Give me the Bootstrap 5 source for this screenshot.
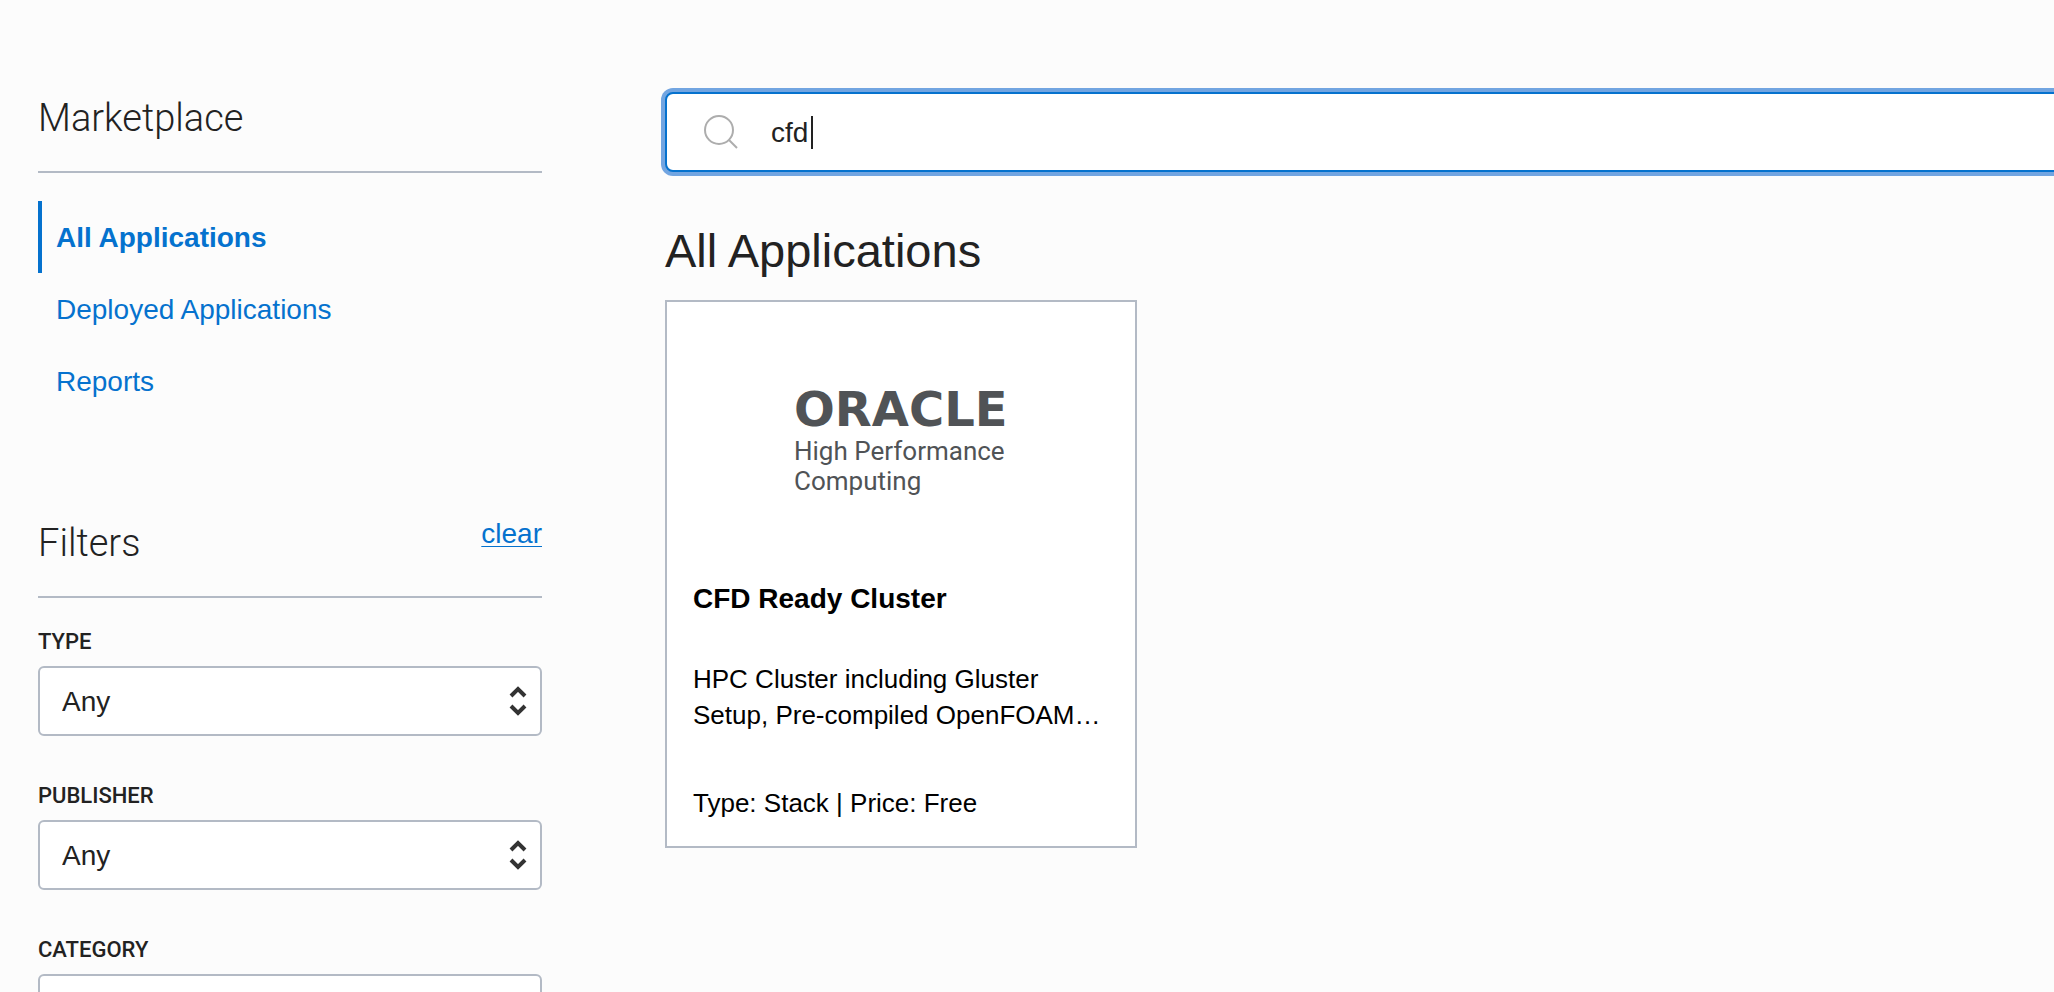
<!DOCTYPE html>
<html lang="en">
<head>
<meta charset="utf-8">
<meta name="viewport" content="width=device-width, initial-scale=1">
<title>Marketplace</title>
<link href="https://cdn.jsdelivr.net/npm/bootstrap@5.3.0/dist/css/bootstrap.min.css" rel="stylesheet">
<style>
  :root { --line: #b3bac5; --link: #0572ce; --ink: #222; }
  body { background: #fcfcfc; color: var(--ink); font-family: "Liberation Sans", Arial, sans-serif; font-size: 28px; line-height: 36px; }
  a { color: var(--link); }
  .page { padding-left: 38px; gap: 123px; }
  .side { flex: 0 0 504px; padding-top: 91px; }
  .side-head { border-bottom: 2px solid var(--line); padding-bottom: 26px; }
  .side-head h2 { font-family: Roboto, "Liberation Sans", sans-serif; font-weight: 300; font-size: 38px; line-height: 54px; }
  .side-nav { margin: 28px 0 99px; }
  .side-nav .nav-link { border-left: 4px solid transparent; padding: 19px 14px 17px; color: var(--link); }
  .side-nav .nav-link.active { border-color: var(--link); font-weight: 700; }
  .clear-link { text-decoration-thickness: 1px; text-underline-offset: 3px; }
  .filters { padding-top: 30px; }
  .filter { margin-bottom: 46px; }
  .filter .form-label { font-family: Roboto, "Liberation Sans", sans-serif; font-weight: 500; font-size: 22px; line-height: 28px; margin-bottom: 10px; }
  .filter .form-select { height: 70px; border: 2px solid var(--line); border-radius: 6px; padding: 2px 48px 0 22px; font-size: 28px; line-height: 36px; color: var(--ink); background: #fff url("data:image/svg+xml,%3Csvg xmlns='http://www.w3.org/2000/svg' viewBox='0 0 18 30'%3E%3Cpath d='M2 10 9 3 16 10M2 20 9 27 16 20' fill='none' stroke='%23333' stroke-width='4'/%3E%3C/svg%3E") no-repeat right 13px center / 18px 30px; }
  .results { padding-top: 92px; margin-right: -12px; }
  .search-box { height: 80px; background: #fff; border: 2px solid var(--link); border-radius: 8px; box-shadow: 0 0 0 4px #72a5e1; padding-left: 36px; gap: 32px; }
  .search-box .form-control { border: 0; box-shadow: none; background: none; padding: 2px 0 0; font-size: 28px; line-height: 36px; color: var(--ink); caret-color: transparent; }
  .caret { left: 40px; top: 3px; width: 2px; height: 33px; background: var(--ink); }
  .results h1 { font-size: 47px; line-height: 56px; font-weight: 400; margin: 51px 0 21px; }
  .app-card { width: 472px; border: 2px solid var(--line); background: #fff; color: #000; padding: 0 24px 25px 26px; font-size: 26px; }
  .app-logo { height: 279px; padding: 81px 0 0 101px; color: #505356; font-family: Roboto, sans-serif; font-size: 26px; line-height: 30px; }
  .app-logo strong { font-family: "DejaVu Sans", sans-serif; font-size: 48px; line-height: 53px; }
  .app-card h3 { font-size: 28px; line-height: 36px; font-weight: 700; margin-bottom: 44px; }
  .app-card p { margin-bottom: 52px; }
</style>
</head>
<body>
<div class="page d-flex align-items-start vh-100 overflow-hidden">
  <aside class="side">
    <div class="side-head"><h2 class="m-0">Marketplace</h2></div>
    <nav class="side-nav nav flex-column">
      <a class="nav-link active" href="#">All Applications</a>
      <a class="nav-link" href="#">Deployed Applications</a>
      <a class="nav-link" href="#">Reports</a>
    </nav>
    <div class="side-head d-flex justify-content-between align-items-start">
      <h2 class="m-0">Filters</h2>
      <a class="clear-link" href="#">clear</a>
    </div>
    <form class="filters">
      <div class="filter">
        <label class="form-label d-block" for="type">TYPE</label>
        <select class="form-select" id="type"><option>Any</option></select>
      </div>
      <div class="filter">
        <label class="form-label d-block" for="publisher">PUBLISHER</label>
        <select class="form-select" id="publisher"><option>Any</option></select>
      </div>
      <div class="filter">
        <label class="form-label d-block" for="category">CATEGORY</label>
        <select class="form-select" id="category"><option>Any</option></select>
      </div>
    </form>
  </aside>
  <main class="results flex-grow-1">
    <div class="search-box d-flex align-items-center">
      <svg width="36" height="36" viewBox="0 0 36 36" class="flex-shrink-0" fill="none" stroke="#adadad" stroke-width="2" aria-hidden="true"><circle cx="16" cy="16" r="14"/><path d="M26 26l8 8"/></svg>
      <div class="position-relative flex-grow-1">
        <input class="form-control" type="text" value="cfd" aria-label="Search applications">
        <span class="caret position-absolute"></span>
      </div>
    </div>
    <h1>All Applications</h1>
    <article class="app-card">
      <div class="app-logo"><strong class="d-block">ORACLE</strong>High Performance<br>Computing</div>
      <h3>CFD Ready Cluster</h3>
      <p>HPC Cluster including Gluster Setup, Pre-compiled OpenFOAM…</p>
      <div>Type: Stack | Price: Free</div>
    </article>
  </main>
</div>
<script src="https://cdn.jsdelivr.net/npm/bootstrap@5.3.0/dist/js/bootstrap.bundle.min.js"></script>
</body>
</html>
